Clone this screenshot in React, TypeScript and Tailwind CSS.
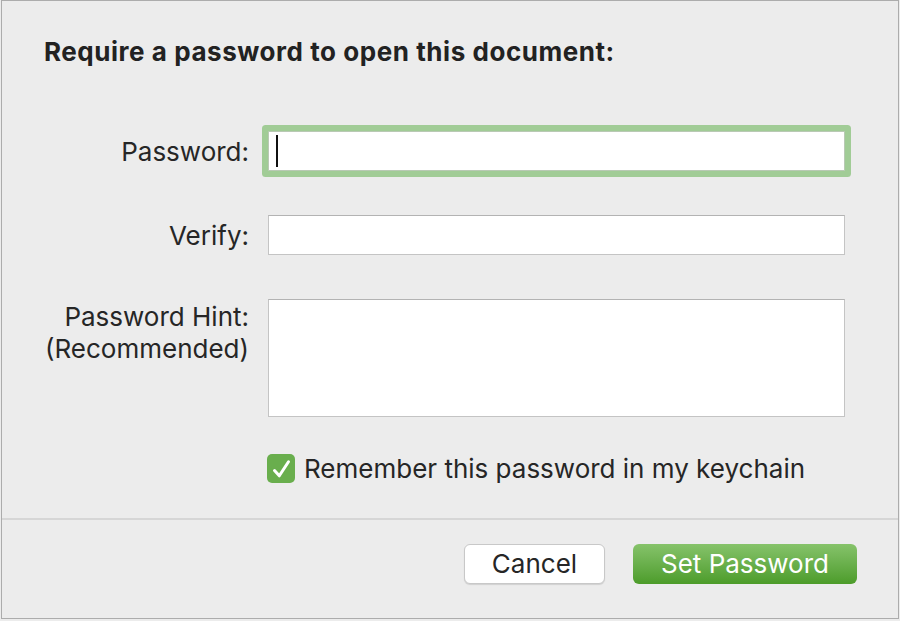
import React from 'react';

const font = "font-['Inter','Liberation_Sans',sans-serif]";

const Label: React.FC<{ children: React.ReactNode; top?: boolean }> = ({ children, top }) => (
  <div
    className={`w-[205px] shrink-0 text-right text-[26px] text-[#262626] ${
      top ? 'pt-[2px] leading-[32px]' : 'leading-[29px]'
    }`}
  >
    {children}
  </div>
);

export default function App() {
  return (
    <div className={`w-[900px] h-[621px] bg-[#ececec] pl-px ${font}`}>
      <div className="w-[898px] h-[619px] border border-[#acacac] flex flex-col">
        {/* Form */}
        <div className="flex-1 pl-[42px] pt-[36px]">
          <h1 className="text-[26px] leading-[30px] font-bold tracking-[0.55px] text-[#222222]">
            Require a password to open this document:
          </h1>

          <div className="mt-[64px] flex flex-col">
            <div className="flex items-center gap-[19px]">
              <Label>Password:</Label>
              <div className="relative h-[40px] w-[577px] bg-white border border-[#b9c9b4] rounded-[1px] shadow-[0_0_0_6px_#a1cc96] flex items-center">
                <span className="ml-[7px] w-[2px] h-[32px] bg-[#111111]" />
              </div>
            </div>

            <div className="mt-[44px] flex items-center gap-[19px]">
              <Label>Verify:</Label>
              <div className="h-[40px] w-[577px] bg-white border border-[#c4c4c4] border-t-[#b3b3b3]" />
            </div>

            <div className="mt-[44px] flex items-start gap-[19px]">
              <Label top>
                Password Hint:
                <br />
                (Recommended)
              </Label>
              <div className="h-[118px] w-[577px] bg-white border border-[#c4c4c4] border-t-[#b3b3b3]" />
            </div>

            <div className="mt-[37px] ml-[223px] flex items-center gap-[9px]">
              <div className="w-[28px] h-[29px] rounded-[5px] bg-[#69ae4d] flex items-center justify-center">
                <svg width="28" height="29" viewBox="0 0 28 29" fill="none">
                  <path
                    d="M7.5 16.5 L12.3 21.8 L21.5 7.8"
                    stroke="white"
                    strokeWidth="3"
                    strokeLinecap="round"
                    strokeLinejoin="round"
                  />
                </svg>
              </div>
              <span className="text-[26px] leading-[29px] text-[#262626]">
                Remember this password in my keychain
              </span>
            </div>
          </div>
        </div>

        {/* Footer */}
        <div className="h-[100px] border-t-2 border-[#d6d6d6] flex justify-end items-start gap-[28px] pr-[41px] pt-[24px]">
          <button className="w-[141px] h-[40px] rounded-[6px] bg-white border border-[#c8c8c8] shadow-[0_1px_1px_rgba(0,0,0,0.12)] text-[26px] text-[#262626] leading-none">
            Cancel
          </button>
          <button className="w-[224px] h-[40px] rounded-[6px] bg-gradient-to-b from-[#86c36a] to-[#4c9c29] text-[26px] text-white leading-none">
            Set Password
          </button>
        </div>
      </div>
    </div>
  );
}
